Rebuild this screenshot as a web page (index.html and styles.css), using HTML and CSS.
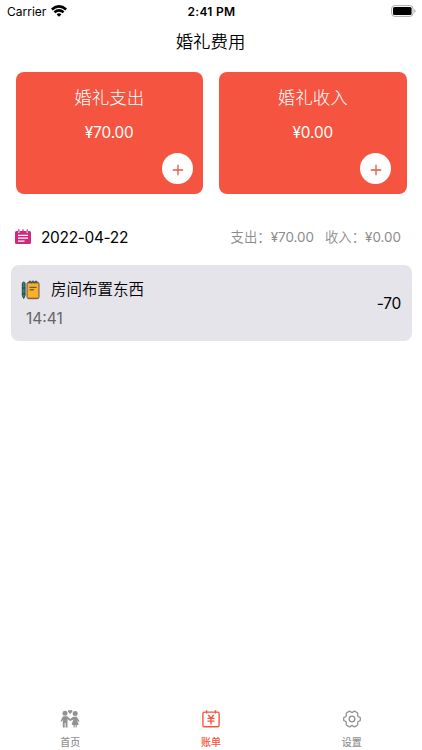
FILE: index.html
```html
<!DOCTYPE html>
<html lang="zh-CN">
<head>
<meta charset="utf-8">
<title>婚礼费用</title>
<link rel="stylesheet" href="styles.css">
</head>
<body>
<div class="app">
  <header class="status">
    <div class="carrier"><span>Carrier</span>
      <svg width="16" height="12" viewBox="0 0 16 12"><g fill="none" stroke="#000" stroke-width="2.5"><path d="M.8 4.500Q8-1.800 15.200 4.500"/><path d="M3.400 7.300Q8 3.400 12.600 7.300"/></g><path d="M5.600 9.400Q8 7.300 10.400 9.400L8 11.700Z"/></svg>
    </div>
    <div class="clock">2:41 PM</div>
    <svg class="battery" width="26" height="12" viewBox="0 0 26 12"><rect x="1.600" y=".6" width="21.400" height="10.800" rx="3.200" fill="#fff" stroke="#aaa"/><rect x="3" y="2" width="18.600" height="8" rx="1.500"/><path d="M24.300 4v4q1.300-.6 1.300-2t-1.300-2" fill="#aaa"/></svg>
  </header>
  <h1 class="title">婚礼费用</h1>
  <section class="cards">
    <article class="card"><h2>婚礼支出</h2><p>¥70.00</p>
      <button class="add" aria-label="+"><svg width="12" height="12" viewBox="0 0 12 12"><path d="M6 .8v10.400M.8 6h10.400"/></svg></button></article>
    <article class="card income"><h2>婚礼收入</h2><p>¥0.00</p>
      <button class="add" aria-label="+"><svg width="12" height="12" viewBox="0 0 12 12"><path d="M6 .8v10.400M.8 6h10.400"/></svg></button></article>
  </section>
  <section class="day">
    <svg class="calendar" width="16" height="16" viewBox="0 0 16 16"><path fill="#d0287f" d="M1.500 2H3v1.300q.8 1.200 1.600 0V2h6.800v1.300q.8 1.200 1.600 0V2h1.500Q16 2 16 3.500v10q0 1.500-1.500 1.500h-13Q0 15 0 13.500v-10Q0 2 1.500 2"/><path d="M3.800 .3v2.400M8 .3v2M12.200 .3v2.400" stroke="#d0287f" stroke-width="1.200"/><path d="M3 6.300h10M3 9.200h10M3 12.100h6.500" stroke="#fff" stroke-width="1.300"/></svg>
    <time>2022-04-22</time>
    <div class="totals"><span>支出：<b>¥70.00</b></span><span>收入：<b>¥0.00</b></span></div>
  </section>
  <section class="entry">
    <div class="info">
      <div class="name">
        <svg width="19" height="20" viewBox="0 0 19 20"><rect x="6" y="2.200" width="12" height="16.500" rx="1.800" fill="#f9b02c" stroke="#4b4a35" stroke-width=".9"/><path d="M6.600 17.500h10.800" stroke="#ee8a24"/><path d="M8 3.500V1.700q1-1.700 2 0v1.800M11 3.500V1.700q1-1.700 2 0v1.800M14 3.500V1.700q1-1.700 2 0v1.800" fill="none" stroke="#263b40" stroke-width=".9"/><path d="M8.500 7.300h7M8.500 9.800h4.500" stroke="#4b4a35"/><path d="M1.300 4q0-2 1.400-2t1.400 2V15.500l-1.400 3-1.400-3Z" fill="#35866a" stroke="#263b40" stroke-width=".9"/><path d="M1.300 8h2.800M1.300 14h2.800" stroke="#263b40"/></svg>
        <span>房间布置东西</span>
      </div>
      <div class="time">14:41</div>
    </div>
    <div class="amount">-70</div>
  </section>
  <nav class="tabs">
    <a class="tab"><svg width="20" height="20" viewBox="0 0 20 20"><g fill="#929292"><circle cx="5" cy="4.200" r="2.500"/><circle cx="15.200" cy="4.600" r="2.500"/><path d="M10.200 4.900 8 2.800Q7.600.900 9.100.9q.8 0 1.100.7.300-.7 1.100-.7 1.500 0 1.100 1.900Z"/><path d="M3 7.300h4.300l2.900 2.700 2.900-2.300h3.700l2.700 4.600-1 .7-1.700-2.100 1.900 4.300q-1.100 1.100-2 1v2.300h-1.100v-2.200h-.9v2.200h-1.100v-2.300q-1.200 0-1.900-1l1.600-4.600-2.400 1.200h-1.300L7.500 9.900v8.600H5.600v-4.600h-.9v4.600H2.800v-8L1.700 12.700l-1.200-.4Z"/></g></svg><span>首页</span></a>
    <a class="tab active"><svg width="20" height="20" viewBox="0 0 20 20"><g fill="none" stroke="currentColor" stroke-width="1.400"><rect x="1.900" y="3.100" width="16.200" height="14.700" rx="1.600"/><path d="M5.600 1.300v3.200M14.400 1.300v3.200M7.200 6l2.800 3.200L12.800 6M6.500 9.400h7M6.500 12.100h7M10 9.200v6.300"/></g></svg><span>账单</span></a>
    <a class="tab"><svg width="20" height="20" viewBox="0 0 20 20"><g fill="none" stroke="currentColor" stroke-width="1.300"><path d="M7 2.400Q8.300 1.800 8.900 3q1.100 1 2.200 0 .6-1.200 1.900-.6l2.300 1.400q1 .8.300 2-.2 1.500 1.200 2 1.500 0 1.500 1.300v1.800q0 1.300-1.500 1.300-1.400.5-1.200 2 .7 1.200-.3 2L13 17.600q-1.300.6-1.900-.6-1.100-1-2.200 0-.6 1.200-1.900.6l-2.300-1.400q-1-.8-.3-2 .2-1.500-1.200-2-1.500 0-1.500-1.300V9.100q0-1.300 1.500-1.300 1.400-.5 1.200-2-.7-1.200.3-2Z"/><circle cx="10" cy="10" r="2.800"/></g></svg><span>设置</span></a>
  </nav>
</div>
</body>
</html>
```
FILE: styles.css
```css
* { box-sizing: border-box; margin: 0; padding: 0; }
body { background: #fff; color: #000; font-family: Inter, "Noto Sans CJK SC", sans-serif; }
svg { display: block; flex: none; }
.app { width: 422px; height: 750px; display: flex; flex-direction: column; overflow: hidden; }
.status { height: 22px; display: grid; grid-template-columns: 1fr auto 1fr; align-items: center; padding: 0 6px 0 7px; }
.carrier { display: flex; align-items: center; gap: 5px; font-size: 12px; }
.carrier svg { margin-top: -1px; }
.clock { font-size: 12px; font-weight: 600; letter-spacing: .3px; }
.battery { justify-self: end; margin-top: -1px; }
.title { height: 40px; line-height: 40px; text-align: center; font-size: 17.400px; font-weight: 350; padding-right: 1px; }
.cards { display: flex; gap: 16px; padding: 10px 15.500px 0; }
.card { flex: 1; height: 122px; border-radius: 8px; background: #f55540; color: #fff; display: flex; flex-direction: column; align-items: center; padding-top: 13px; }
.card h2 { font-size: 17.500px; font-weight: 300; line-height: 26px; }
.card p { font-size: 15.300px; line-height: 22px; margin-top: 11px; font-weight: 400; letter-spacing: -.1px; }
.add { width: 31px; height: 31px; border: 0; border-radius: 50%; background: #fff; align-self: flex-end; margin: 9px 10px 0 0; display: flex; align-items: center; justify-content: center; padding-top: 2px; }
.income .add { margin-right: 15.500px; }
.add path { stroke: #e85744; stroke-width: 1.300; fill: none; }
.day { height: 71px; display: flex; align-items: center; padding: 16px 21px 0 15px; }
.calendar { margin-top: -1px; }
.day time { margin-left: 10px; font-size: 15.500px; letter-spacing: -.35px; }
.totals { margin-left: auto; display: flex; gap: 11px; color: #8b8b8b; font-size: 13.400px; font-weight: 350; line-height: 20px; margin-top: -1px; }
.totals b { font-weight: 400; }
.entry { margin: 0 10.500px; height: 76px; border-radius: 8px; background: #e5e4ea; display: flex; align-items: center; justify-content: space-between; padding: 0 10.500px; }
.info { padding-top: 2px; }
.name { display: flex; align-items: center; gap: 11px; font-size: 15.500px; line-height: 24px; font-weight: 350; }
.time { margin: 6px 0 0 5px; font-size: 15.500px; line-height: 22px; color: #666; }
.amount { font-size: 15.500px; letter-spacing: -.3px; }
.tabs { margin-top: auto; height: 41px; display: flex; }
.tab { flex: 1; display: flex; flex-direction: column; align-items: center; color: #929292; font-size: 10px; font-weight: 500; line-height: 14px; gap: 6px; }
.tab.active { color: #f55540; }
```
